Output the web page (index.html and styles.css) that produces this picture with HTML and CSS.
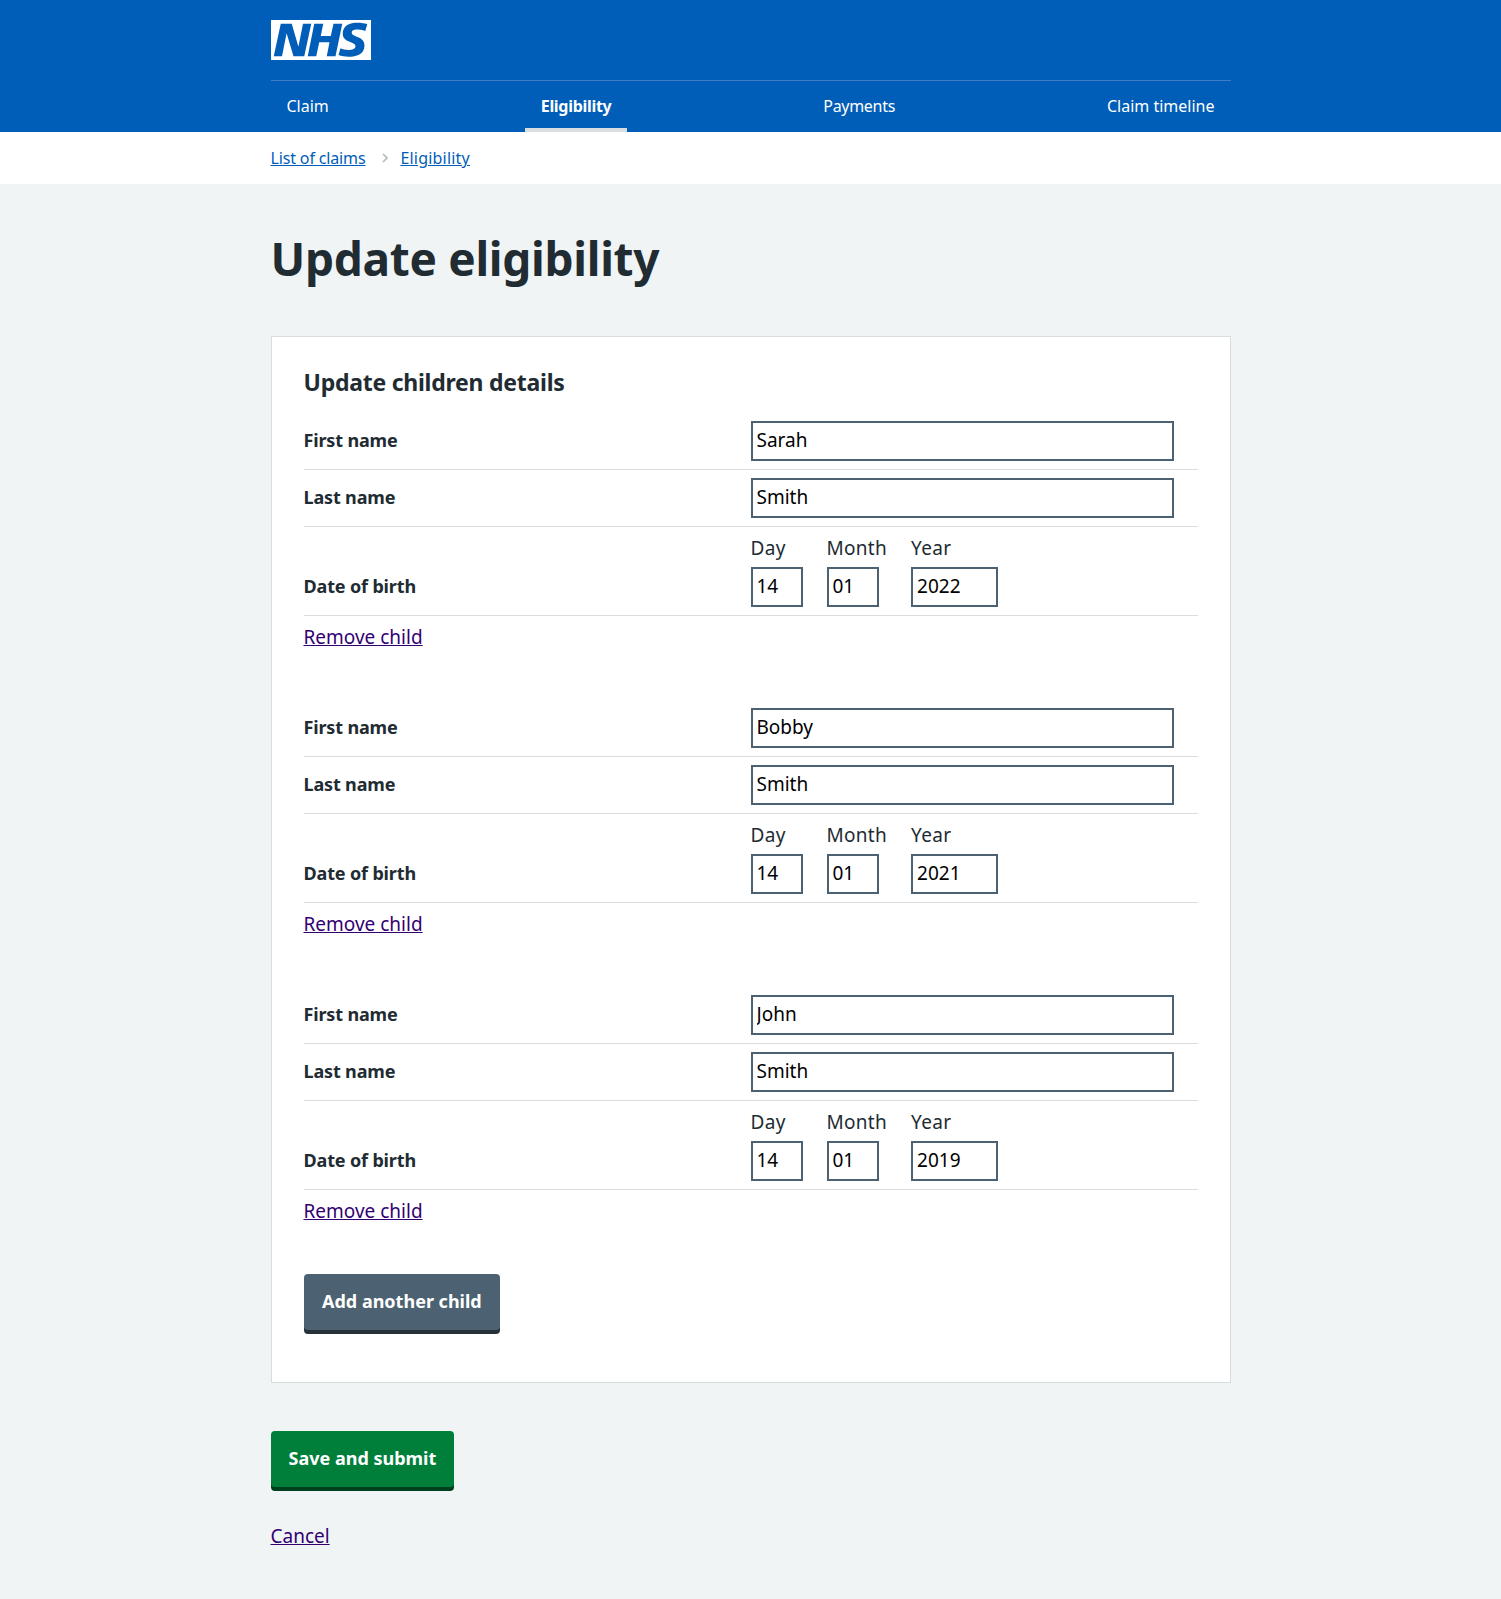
FILE: index.html
```html
<!DOCTYPE html>
<html lang="en">
<head>
    <meta charset="UTF-8">
    <meta name="viewport" content="width=device-width, initial-scale=1.0">
    <title>Update eligibility</title>
    <link rel="stylesheet" href="styles.css">
</head>
<body>
    <header class="header">
        <div class="wrapper">
            <a class="logo" href="#" aria-label="NHS">
                <svg viewBox="0 0 40 16" width="100" height="40">
                    <path fill="#fff" d="M0 0h40v16H0z"/>
                    <path fill="#005eb8" d="M3.9 1.5h4.4l2.6 9h.1l1.8-9h3.3l-2.8 13H9l-2.7-9h-.1l-1.8 9H1.1M17.3 1.5h3.6l-1 4.9h4L25 1.5h3.5l-2.7 13h-3.5l1.1-5.6h-4.1l-1.2 5.6h-3.4M37.7 4.4c-.7-.3-1.6-.6-2.9-.6-1.4 0-2.5.2-2.5 1.3 0 1.8 5.1 1.2 5.1 5.1 0 3.6-3.3 4.5-6.4 4.5-1.3 0-2.9-.3-4-.7l.8-2.7c.7.4 2.1.7 3.2.7s2.8-.2 2.8-1.5c0-2.1-5.1-1.3-5.1-5 0-3.4 2.9-4.4 5.8-4.4 1.6 0 3.1.2 4 .6"/>
                </svg>
            </a>
            <nav class="nav">
                <a href="#">Claim</a>
                <a href="#" class="active">Eligibility</a>
                <a href="#" class="tight">Payments</a>
                <a href="#">Claim timeline</a>
            </nav>
        </div>
    </header>

    <div class="breadcrumb">
        <div class="wrapper breadcrumb-inner">
            <a href="#">List of claims</a>
            <svg class="chevron" viewBox="0 0 8 12" width="8" height="12">
                <path d="M2 2l4 4-4 4" fill="none" stroke="#aeb7bd" stroke-width="1.6"/>
            </svg>
            <a href="#" class="current">Eligibility</a>
        </div>
    </div>

    <main class="wrapper main">
        <h1>Update eligibility</h1>

        <form class="card">
            <h2>Update children details</h2>

            <section class="child">
                <div class="row">
                    <label class="row-label">First name</label>
                    <div class="row-value"><input class="input" type="text" value="Sarah"></div>
                </div>
                <div class="row">
                    <label class="row-label">Last name</label>
                    <div class="row-value"><input class="input" type="text" value="Smith"></div>
                </div>
                <div class="row">
                    <label class="row-label">Date of birth</label>
                    <div class="row-value date">
                        <div class="date-item"><label>Day</label><input class="input input-2" type="text" value="14"></div>
                        <div class="date-item"><label>Month</label><input class="input input-2" type="text" value="01"></div>
                        <div class="date-item"><label>Year</label><input class="input input-4" type="text" value="2022"></div>
                    </div>
                </div>
                <a class="link" href="#">Remove child</a>
            </section>

            <section class="child">
                <div class="row">
                    <label class="row-label">First name</label>
                    <div class="row-value"><input class="input" type="text" value="Bobby"></div>
                </div>
                <div class="row">
                    <label class="row-label">Last name</label>
                    <div class="row-value"><input class="input" type="text" value="Smith"></div>
                </div>
                <div class="row">
                    <label class="row-label">Date of birth</label>
                    <div class="row-value date">
                        <div class="date-item"><label>Day</label><input class="input input-2" type="text" value="14"></div>
                        <div class="date-item"><label>Month</label><input class="input input-2" type="text" value="01"></div>
                        <div class="date-item"><label>Year</label><input class="input input-4" type="text" value="2021"></div>
                    </div>
                </div>
                <a class="link" href="#">Remove child</a>
            </section>

            <section class="child">
                <div class="row">
                    <label class="row-label">First name</label>
                    <div class="row-value"><input class="input" type="text" value="John"></div>
                </div>
                <div class="row">
                    <label class="row-label">Last name</label>
                    <div class="row-value"><input class="input" type="text" value="Smith"></div>
                </div>
                <div class="row">
                    <label class="row-label">Date of birth</label>
                    <div class="row-value date">
                        <div class="date-item"><label>Day</label><input class="input input-2" type="text" value="14"></div>
                        <div class="date-item"><label>Month</label><input class="input input-2" type="text" value="01"></div>
                        <div class="date-item"><label>Year</label><input class="input input-4" type="text" value="2019"></div>
                    </div>
                </div>
                <a class="link" href="#">Remove child</a>
            </section>

            <button class="button button-secondary" type="button">Add another child</button>
        </form>

        <button class="button button-primary" type="button">Save and submit</button>
        <a class="link cancel" href="#">Cancel</a>
    </main>
</body>
</html>
```
FILE: styles.css
```css
/* General Styles */
body {
    font-family: 'Noto Sans', 'Open Sans', sans-serif;
    font-size: 19px;
    line-height: 28px;
    margin: 0;
    padding: 0;
    background-color: #f0f4f5;
    color: #212b32;
}

.wrapper {
    width: 960px;
    margin: 0 auto;
}

/* Header */
.header {
    background-color: #005eb8;
    height: 132px;
}

.logo {
    display: block;
    height: 40px;
    padding-top: 20px;
    padding-bottom: 20px;
}

.logo svg {
    display: block;
}

.nav {
    display: flex;
    justify-content: space-between;
    border-top: 1px solid #3f7ec6;
    height: 51px;
}

.nav a {
    box-sizing: border-box;
    height: 51px;
    padding: 0 16px;
    color: white;
    font-size: 16px;
    line-height: 51px;
    text-decoration: none;
}

.nav a.active {
    font-weight: bold;
    letter-spacing: -0.3px;
    border-bottom: 4px solid #d8dde0;
}

.nav a.tight {
    letter-spacing: -0.3px;
}

/* Breadcrumb */
.breadcrumb {
    background-color: white;
    height: 52px;
}

.breadcrumb-inner {
    display: flex;
    align-items: center;
    height: 52px;
    font-size: 16px;
    letter-spacing: -0.15px;
}

.breadcrumb a {
    color: #005eb8;
}

.breadcrumb a.current {
    letter-spacing: 0.2px;
}

.chevron {
    margin: 0 11px 0 16px;
}

/* Main */
.main {
    padding-top: 48px;
    padding-bottom: 48px;
}

h1 {
    font-size: 46px;
    line-height: 52px;
    font-weight: bold;
    letter-spacing: -0.3px;
    margin: 0 0 52px;
}

h2 {
    font-size: 23px;
    line-height: 32px;
    font-weight: bold;
    letter-spacing: -0.25px;
    margin: 0 0 15px;
}

/* Card */
.card {
    background-color: white;
    border: 1px solid #d8dde0;
    padding: 29px 32px 52px;
    margin-bottom: 48px;
}

.child {
    margin-bottom: 48px;
}

/* Form rows */
.row {
    display: flex;
    align-items: flex-end;
    padding: 8px 0;
    border-bottom: 1px solid #d8dde0;
}

.row-label {
    width: 50%;
    font-size: 18px;
    font-weight: bold;
    letter-spacing: -0.15px;
    line-height: 38px;
    padding-bottom: 2px;
}

.row-value {
    width: 50%;
}

.input {
    display: block;
    box-sizing: border-box;
    width: 423px;
    height: 40px;
    padding: 3px 4px 5px;
    font-family: inherit;
    font-size: 19px;
    color: #000;
    background-color: white;
    border: 2px solid #4c6272;
    border-radius: 0;
    outline: none;
}

.input-2 {
    width: 52px;
}

.input-4 {
    width: 87px;
}

.date {
    display: flex;
}

.date-item {
    margin-right: 24px;
}

.date-item label {
    display: block;
    letter-spacing: 0.3px;
    line-height: 26px;
    margin-bottom: 6px;
}

/* Links */
.link {
    color: #330072;
}

.child .link {
    display: inline-block;
    margin: 7px 0 1px;
}

.cancel {
    display: inline-block;
    margin-top: 35px;
}

/* Buttons */
.button {
    display: block;
    height: 56px;
    padding: 0 18px 2px;
    font-family: inherit;
    font-size: 18px;
    font-weight: bold;
    color: white;
    border: 0;
    border-radius: 4px;
    cursor: pointer;
}

.button-secondary {
    padding: 0 18.5px 2px;
    background-color: #4c6272;
    box-shadow: 0 4px 0 #263139;
}

.button-primary {
    background-color: #007f3b;
    box-shadow: 0 4px 0 #00401e;
}
```
